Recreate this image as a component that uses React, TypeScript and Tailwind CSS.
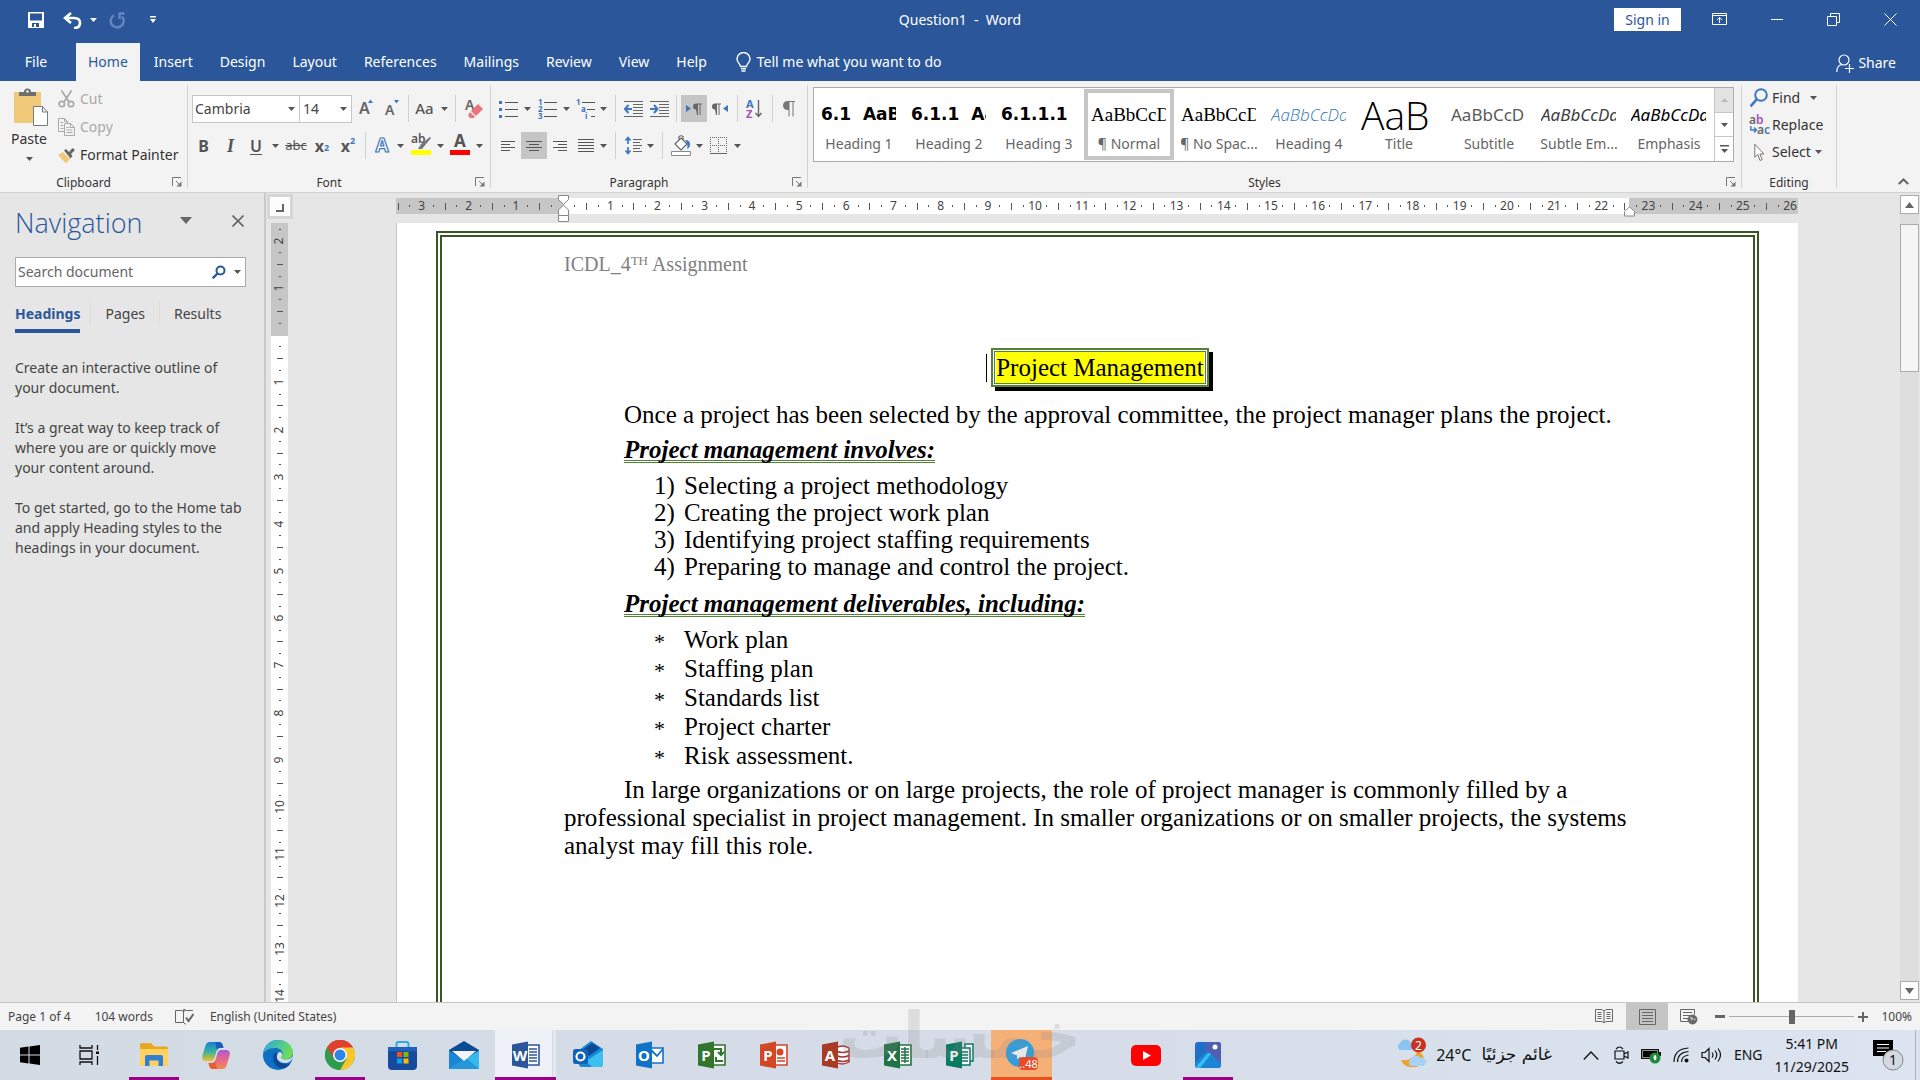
import React from "react";

type Kids = { children?: React.ReactNode };

/* ---------- small building blocks ---------- */

function Caret({ className = "text-[#555]" }: { className?: string }) {
  return (
    <svg width="7" height="4" viewBox="0 0 7 4" className={className} aria-hidden="true">
      <path d="M0 0h7L3.5 4z" fill="currentColor" />
    </svg>
  );
}

function Btn({ label, className, children }: { label: string; className: string } & Kids) {
  return (
    <button type="button" aria-label={label} className={`flex h-[27px] shrink-0 items-center justify-center ${className}`}>
      {children}
    </button>
  );
}

function Drop({ label, className }: { label: string; className: string }) {
  return (
    <Btn label={label} className={className}>
      <Caret />
    </Btn>
  );
}

function Sep({ className }: { className: string }) {
  return (
    <div className={`flex h-[27px] shrink-0 justify-center ${className}`}>
      <div className="w-px bg-[#d2d2d2]" />
    </div>
  );
}

function Launcher({ label }: { label: string }) {
  return (
    <button type="button" aria-label={label} className="absolute right-1 bottom-0 flex h-3 w-3 items-center justify-center">
      <svg width="10" height="10" viewBox="0 0 10 10" fill="none" stroke="#777">
        <path d="M.5 9V.5H9M4 4l4 4" />
        <path d="M9.5 4.5v5h-5z" fill="#777" stroke="none" />
      </svg>
    </button>
  );
}

function Group({ name, className, launcher, children }: { name: string; className: string; launcher?: boolean } & Kids) {
  return (
    <section aria-label={name} className={`relative flex flex-col border-r border-[#d2d2d2] ${className}`}>
      <div className="flex-1">{children}</div>
      <div className={`h-[13px] text-center text-xs leading-4 text-[#333] ${launcher ? "pr-5" : ""}`}>{name}</div>
      {launcher && <Launcher label={`${name} settings`} />}
    </section>
  );
}

function Lines({ rows, w = 18, h = 18 }: { rows: [number, number, number][]; w?: number; h?: number }) {
  return (
    <svg width={w} height={h} viewBox={`0 0 ${w} ${h}`} aria-hidden="true">
      {rows.map(([x, y, len], i) => (
        <rect key={i} x={x} y={y} width={len} height="1" fill="#555" />
      ))}
    </svg>
  );
}

/* ---------- title bar ---------- */

function TitleBar() {
  return (
    <div className="grid h-[43px] grid-cols-[1fr_auto_1fr] pb-3 text-white">
      <div className="flex items-start pt-2.5">
        <button type="button" aria-label="Save" className="ml-[26px] flex h-5 w-5 items-center justify-center">
          <svg width="16" height="16" viewBox="0 0 16 16">
            <path fillRule="evenodd" d="M0 0h16v16H0zM2 1.500v7h12v-7zM4 11v4h2v-3h2v3h3v-4z" fill="#fff" />
          </svg>
        </button>
        <button type="button" aria-label="Undo" className="ml-4 flex h-5 w-5 items-center justify-center">
          <svg width="19" height="17" viewBox="0 0 19 17" fill="none" stroke="#fff">
            <path d="M8 1 2 6l6 5M2 6h9q6 0 6 5t-6 5" strokeWidth="2.600" />
          </svg>
        </button>
        <button type="button" aria-label="Undo options" className="ml-[3px] flex h-5 w-4 items-center justify-center">
          <Caret className="text-white" />
        </button>
        <button type="button" aria-label="Repeat" className="ml-1.5 flex h-5 w-5 items-center justify-center">
          <svg width="17" height="17" viewBox="0 0 17 17" fill="none" stroke="#6486c0" strokeWidth="2.400">
            <path d="M5 3.200A6.500 6.500 0 1 0 13 4.500M10 1.500h5.500M10.500 1v6" />
          </svg>
        </button>
        <button type="button" aria-label="Customize Quick Access Toolbar" className="ml-4 flex h-5 w-5 items-center justify-center">
          <svg width="7" height="8" viewBox="0 0 7 8" fill="#fff">
            <path d="M0 0h6v1.500H0zM0 3h6L3 7z" />
          </svg>
        </button>
      </div>
      <h1 className="pt-2.5 text-sm leading-5 whitespace-pre">Question1  -  Word</h1>
      <div className="flex items-start justify-end">
        <button type="button" className="mt-2 mr-7 h-[23px] w-[67px] bg-white text-sm leading-5 text-[#2b579a]">
          Sign in
        </button>
        <button type="button" aria-label="Ribbon Display Options" className="mt-2.5 mr-[38px] flex h-[18px] w-5 items-center justify-center">
          <svg width="15" height="12" viewBox="0 0 15 12" fill="none" stroke="#fff">
            <path d="M.5.5h14v11H.5zM.5 2.500h14M7.500 10V4.500M5 7l2.500-2.500L10 7" />
          </svg>
        </button>
        <button type="button" aria-label="Minimize" className="mt-2.5 mr-9 flex h-[18px] w-5 items-center justify-center">
          <span className="h-px w-3 bg-white" />
        </button>
        <button type="button" aria-label="Restore Down" className="mt-2.5 mr-[37px] flex h-[18px] w-5 items-center justify-center">
          <svg width="13" height="13" viewBox="0 0 13 13" fill="none" stroke="#fff">
            <path d="M.5 3.500h9v9h-9zM3.500 3.500v-3h9v9h-3" />
          </svg>
        </button>
        <button type="button" aria-label="Close" className="mt-2.5 mr-5 flex h-[18px] w-5 items-center justify-center">
          <svg width="13" height="13" viewBox="0 0 13 13" fill="none" stroke="#fff">
            <path d="m.5.5 12 12M12.500.5l-12 12" />
          </svg>
        </button>
      </div>
    </div>
  );
}

function TabRow() {
  const tabs = ["Insert", "Design", "Layout", "References", "Mailings", "Review", "View", "Help"];
  return (
    <nav className="flex h-[38px] items-center text-sm leading-5 text-white">
      <button type="button" className="w-[76px] pr-1 text-center">File</button>
      <button type="button" className="h-full bg-[#f3f3f3] px-3 text-[#2b579a]">Home</button>
      {tabs.map((t) => (
        <button key={t} type="button" className="pr-[13px] pl-[14px]">{t}</button>
      ))}
      <button type="button" className="ml-4 flex items-center gap-1.5">
        <svg width="15" height="20" viewBox="0 0 15 20" fill="none" stroke="#fff" strokeWidth="1.400">
          <path d="M4.500 14.500c0-3-3.500-3.500-3.500-7.500a6.500 6.500 0 0 1 13 0c0 4-3.500 4.500-3.500 7.500zM5 16.800h5M5.500 19h4" />
        </svg>
        Tell me what you want to do
      </button>
      <button type="button" className="mr-6 ml-auto flex items-center gap-1 pt-0.5">
        <svg width="18" height="19" viewBox="0 0 18 19" fill="none" stroke="#fff" strokeWidth="1.200">
          <circle cx="8" cy="6" r="5" />
          <path d="M.8 18c0-4 2.200-7 5.200-7.500M9 14.500h9M13.500 10v9" />
        </svg>
        Share
      </button>
    </nav>
  );
}

/* ---------- ribbon ---------- */

function ClipboardGroup() {
  return (
    <Group name="Clipboard" launcher className="w-[188px]">
      <div className="flex">
        <button type="button" className="flex w-[58px] flex-col items-center pt-[3px] text-sm leading-6 text-[#333]">
          <svg width="34" height="39" viewBox="0 0 34 39" className="ml-1">
            <path d="M0 4h27v31H0z" fill="#efc878" />
            <path d="M5 8V4h5a3.500 3.500 0 0 1 7 0h5v4z" fill="#6d6d6d" />
            <circle cx="13.500" cy="3.500" r="1.300" fill="#f3f3f3" />
            <path d="M19.500 18.500h9l5 5.500v13.500h-14zM28.500 18.500V24h5" fill="#fff" stroke="#7a7a7a" />
          </svg>
          Paste
          <span className="pt-1.5 leading-none"><Caret /></span>
        </button>
        <div className="flex flex-col items-start gap-2 pt-1 text-sm leading-5 whitespace-nowrap text-[#a9a9a9]">
          <button type="button" className="flex items-center gap-[5px]">
            <svg width="17" height="18" viewBox="0 0 17 18" fill="none" stroke="#a9a9a9" strokeWidth="1.700">
              <path d="M3.500.5 11 12M13.500.5 6 12" />
              <circle cx="3.800" cy="14" r="2.700" />
              <circle cx="13" cy="14" r="2.700" />
            </svg>
            Cut
          </button>
          <button type="button" className="flex items-center gap-[5px]">
            <svg width="17" height="18" viewBox="0 0 17 18" fill="none" stroke="#a9a9a9">
              <path d="M6 13.500H.5V.5h6l3 3V5M6.500.5v3h3M2.500 4.500H5M2.500 7.500h3M2.500 10.500h3" />
              <path d="M6.500 5.500h6l4 4v8h-10zM12.500 5.500v4h4M8.500 9.500h3M8.500 12h6M8.500 14.500h6" fill="#f3f3f3" />
            </svg>
            Copy
          </button>
          <button type="button" className="flex items-center gap-[5px] text-[#333]">
            <svg width="17" height="17" viewBox="0 0 17 17">
              <path d="m0 8 5-3 7 7-4 4.500z" fill="#efc878" />
              <path d="m6 3.500 2-1.500 3 3 3.500-4L17 3l-4 4 1.500 2-2 2.500z" fill="#666" />
            </svg>
            Format Painter
          </button>
        </div>
      </div>
    </Group>
  );
}

function FontGroup() {
  return (
    <Group name="Font" launcher className="w-[303px]">
      <div className="mt-2.5 flex h-[27px] items-center pl-1">
        <label className="flex h-7 w-[108px] items-center justify-between border border-[#c6c6c6] bg-white pr-1 pl-0.5">
          <input aria-label="Font name" defaultValue="Cambria" className="w-20 text-sm text-[#444] outline-none" />
          <Caret />
        </label>
        <label className="-ml-px flex h-7 w-[53px] items-center justify-between border border-[#c6c6c6] bg-white pr-1 pl-[3px]">
          <input aria-label="Font size" defaultValue="14" className="w-7 text-sm text-[#444] outline-none" />
          <Caret />
        </label>
        <Btn label="Increase font size" className="w-7">
          <svg width="15" height="18" viewBox="0 0 15 18" className="overflow-visible"><text x="0" y="14" fontSize="16" fontWeight="600" fill="#666">A</text><path d="m9 3 2.500-3.500L14 3z" fill="#3c78c0" /></svg>
        </Btn>
        <Btn label="Decrease font size" className="w-6">
          <svg width="15" height="18" viewBox="0 0 15 18" className="overflow-visible"><text x="0" y="15" fontSize="14" fontWeight="600" fill="#666">A</text><path d="m9 0 2.500 3.500L14 0z" fill="#3c78c0" /></svg>
        </Btn>
        <Sep className="w-2" />
        <Btn label="Change case" className="w-[25px] text-[15px] font-medium text-[#555]">Aa</Btn>
        <Drop label="Change case options" className="w-[14px]" />
        <Sep className="w-2" />
        <Btn label="Clear all formatting" className="w-[30px]">
          <svg width="18" height="19" viewBox="0 0 18 19" className="overflow-visible">
            <text x="0" y="11" fontSize="14" fontWeight="600" fill="#666">A</text>
            <path d="m6 12 7-7 5 5-7 7z" fill="#e8757a" />
            <path d="m5 13 5 5-1.500 1H5l-2-2.500z" fill="#e8757a" />
          </svg>
        </Btn>
      </div>
      <div className="mt-2.5 flex pl-0.5">
        <Btn label="Bold" className="w-[27px] text-base font-bold text-[#555]">B</Btn>
        <Btn label="Italic" className="w-[27px] font-['Liberation_Serif',serif] text-lg font-bold text-[#555] italic">I</Btn>
        <Btn label="Underline" className="w-6 text-base font-semibold text-[#555] underline underline-offset-2">U</Btn>
        <Drop label="Underline options" className="w-[15px]" />
        <Btn label="Strikethrough" className="w-[26px] text-[13px] text-[#555] line-through">abc</Btn>
        <Btn label="Subscript" className="w-[26px] text-base font-bold text-[#555]">x<sub className="text-[9px] text-[#3c78c0]">2</sub></Btn>
        <Btn label="Superscript" className="w-[26px] text-base font-bold text-[#555]">x<sup className="text-[9px] text-[#3c78c0]">2</sup></Btn>
        <Sep className="w-2" />
        <Btn label="Text effects" className="w-[25px]">
          <svg width="18" height="19" viewBox="0 0 18 19" className="overflow-visible"><text x="9" y="16" textAnchor="middle" fontSize="19" fontWeight="700" fill="#fff" stroke="#3c78c0" strokeWidth="1.200">A</text></svg>
        </Btn>
        <Drop label="Text effects options" className="w-[13px]" />
        <Btn label="Text highlight color" className="w-[27px]">
          <svg width="20" height="21" viewBox="0 0 20 21" className="overflow-visible">
            <text x="0" y="8" fontSize="12" fontWeight="600" fill="#555">ab</text>
            <path d="m19 2-9 7-3 5h4l9-11z" fill="#777" />
            <path d="M0 15h20v5H0z" fill="#ff0" />
          </svg>
        </Btn>
        <Drop label="Highlight options" className="w-[13px]" />
        <Btn label="Font color" className="w-[26px]">
          <svg width="20" height="21" viewBox="0 0 20 21" className="overflow-visible">
            <text x="10" y="12" textAnchor="middle" fontSize="17" fontWeight="700" fill="#555">A</text>
            <path d="M0 15h20v5H0z" fill="#f00" />
          </svg>
        </Btn>
        <Drop label="Font color options" className="w-[13px]" />
      </div>
    </Group>
  );
}

function ListIcon({ kind }: { kind: "bullets" | "numbers" | "multi" }) {
  const off = kind === "multi" ? [6, 11, 15] : [6, 6, 6];
  const chars = kind === "multi" ? ["1", "a", "i"] : ["1", "2", "3"];
  return (
    <svg width="19" height="20" viewBox="0 0 19 20" className="overflow-visible">
      {[3, 10, 17].map((y, i) => (
        <g key={y}>
          {kind === "bullets" ? (
            <rect x="0" y={y - 1} width="3" height="3" fill="#3c78c0" />
          ) : (
            <text x={off[i] - 6} y={y + 3} fontSize="8" fontWeight="700" fill="#3c78c0">{chars[i]}</text>
          )}
          <rect x={off[i]} y={y} width={19 - off[i]} height="1" fill="#555" />
        </g>
      ))}
    </svg>
  );
}

function IndentIcon({ d }: { d: string }) {
  return (
    <svg width="19" height="18" viewBox="0 0 19 18">
      <path d="M0 1.500h19M9 4.500h10M9 7.500h10M9 10.500h10M9 13.500h10M0 16.500h19" stroke="#666" />
      <path d={d} stroke="#3c78c0" strokeWidth="2" fill="none" />
    </svg>
  );
}

function ParagraphGroup() {
  return (
    <Group name="Paragraph" launcher className="w-[317px]">
      <div className="mt-2.5 flex pl-1">
        <Btn label="Bullets" className="w-[26px]"><ListIcon kind="bullets" /></Btn>
        <Drop label="Bullet options" className="w-3" />
        <Btn label="Numbering" className="w-7"><ListIcon kind="numbers" /></Btn>
        <Drop label="Numbering options" className="w-[11px]" />
        <Btn label="Multilevel list" className="w-[26px]"><ListIcon kind="multi" /></Btn>
        <Drop label="Multilevel options" className="w-[11px]" />
        <Sep className="w-3" />
        <Btn label="Decrease indent" className="w-[25px]"><IndentIcon d="M8 9H1M4.500 5 1 9l3.500 4" /></Btn>
        <Btn label="Increase indent" className="w-[26px]"><IndentIcon d="M0 9h7M4 5l3.500 4L4 13" /></Btn>
        <Sep className="w-[9px]" />
        <Btn label="Left-to-right text direction" className="w-[26px] bg-[#c5c5c5]">
          <svg width="16" height="12" viewBox="0 0 16 12"><path d="m0 2 5 3.500L0 9z" fill="#3c78c0" /><path d="M10 6.500a3 3 0 0 1 0-6h6v1h-1.500V12h-1V1.500h-1.500V12h-1z" fill="#666" /></svg>
        </Btn>
        <Btn label="Right-to-left text direction" className="w-[26px]">
          <svg width="16" height="12" viewBox="0 0 16 12"><path d="m16 2-5 3.500L16 9z" fill="#3c78c0" /><path d="M3 6.500a3 3 0 0 1 0-6h6v1H7.500V12h-1V1.500H5V12H4z" fill="#666" /></svg>
        </Btn>
        <Sep className="w-2" />
        <Btn label="Sort" className="w-[27px]">
          <svg width="17" height="20" viewBox="0 0 17 20" className="overflow-visible">
            <text x="0" y="9" fontSize="11" fontWeight="700" fill="#3c78c0">A</text>
            <text x="0" y="19" fontSize="11" fontWeight="700" fill="#a34fb4">Z</text>
            <path d="M12.500 1v16M9.500 14l3 3.500 3-3.500" fill="none" stroke="#666" strokeWidth="1.400" />
          </svg>
        </Btn>
        <Sep className="w-2" />
        <Btn label="Show paragraph marks" className="w-[26px]">
          <svg width="12" height="16" viewBox="0 0 12 16"><path d="M4.500 9a4.500 4.500 0 0 1 0-9H12v1h-1.500v14.500h-1V1H6.500v14.500h-1V9z" fill="#777" /></svg>
        </Btn>
      </div>
      <div className="mt-2.5 flex pl-1">
        <Btn label="Align left" className="w-[26px]"><Lines w={14} h={12} rows={[[0, 1, 14], [0, 4, 9], [0, 7, 14], [0, 10, 9]]} /></Btn>
        <Btn label="Center" className="w-[26px] bg-[#c5c5c5]"><Lines w={16} h={12} rows={[[0, 1, 16], [3, 4, 10], [0, 7, 16], [3, 10, 10]]} /></Btn>
        <Btn label="Align right" className="w-[26px]"><Lines w={14} h={12} rows={[[0, 1, 14], [5, 4, 9], [0, 7, 14], [5, 10, 9]]} /></Btn>
        <Btn label="Justify" className="w-[25px]"><Lines w={16} h={14} rows={[[0, 0, 16], [0, 3, 16], [0, 6, 16], [0, 9, 16], [0, 12, 16]]} /></Btn>
        <Drop label="Justify options" className="w-[11px]" />
        <Sep className="w-3" />
        <Btn label="Line spacing" className="w-6">
          <svg width="17" height="19" viewBox="0 0 17 19">
            <path d="M8 3.500h9M8 6.500h7M8 9.500h9M8 12.500h7M8 15.500h9" stroke="#666" />
            <path d="M3 8V1.500M.5 4.500 3 1.500l2.500 3M3 11v6.500M.5 14.500l2.500 3 2.500-3" fill="none" stroke="#3c78c0" strokeWidth="1.700" />
          </svg>
        </Btn>
        <Drop label="Line spacing options" className="w-[11px]" />
        <Sep className="w-3" />
        <Btn label="Shading" className="w-[25px]">
          <svg width="20" height="21" viewBox="0 0 20 21" fill="none">
            <path d="m4 9 6-6 6 6-6 6zM8 6V1.500Q10 0 12 1.500V5" fill="#fff" stroke="#666" strokeWidth="1.200" />
            <path d="M14 5q5 0 5 4t-3 5q1.500-5-2-9" fill="#3c78c0" />
            <path d="M.5 16.500h19v4H.5z" fill="#fff" stroke="#888" />
          </svg>
        </Btn>
        <Drop label="Shading options" className="w-3" />
        <Btn label="Borders" className="w-[26px]">
          <svg width="17" height="17" viewBox="0 0 17 17" fill="none" stroke="#666">
            <path d="M.5 0v16M8.500 0v16M16.500 0v16M0 .5h17M0 8.500h17" strokeDasharray="1 1" />
            <path d="M0 16.500h17" />
          </svg>
        </Btn>
        <Drop label="Border options" className="w-[13px]" />
      </div>
    </Group>
  );
}

const styleItems = [
  { sample: "6.1  AaB", name: "Heading 1", look: "font-['DejaVu_Sans',sans-serif] text-[17px] font-bold text-black" },
  { sample: "6.1.1  Aa", name: "Heading 2", look: "font-['DejaVu_Sans',sans-serif] text-[17px] font-bold text-black" },
  { sample: "6.1.1.1", name: "Heading 3", look: "font-['DejaVu_Sans',sans-serif] text-[17px] font-bold text-black" },
  { sample: "AaBbCcDd", name: "¶ Normal", look: "font-['Liberation_Serif',serif] text-[19px] text-black", on: true },
  { sample: "AaBbCcDd", name: "¶ No Spac...", look: "font-['Liberation_Serif',serif] text-[19px] text-black" },
  { sample: "AaBbCcDd", name: "Heading 4", look: "font-['Open_Sans',sans-serif] text-[17px] font-light italic text-[#2e74b5]" },
  { sample: "AaB", name: "Title", look: "font-['Open_Sans',sans-serif] text-[39px] font-light text-black" },
  { sample: "AaBbCcD", name: "Subtitle", look: "text-[17px] text-[#5a5a5a]" },
  { sample: "AaBbCcDd", name: "Subtle Em...", look: "text-[17px] italic text-[#404040]" },
  { sample: "AaBbCcDd", name: "Emphasis", look: "text-[17px] italic text-black" },
];

function StylesGroup() {
  return (
    <Group name="Styles" launcher className="min-w-0 flex-1">
      <div className="mt-0.5 mr-[7px] ml-[5px] flex h-[75px] border border-[#ababab] bg-white">
        <div className="flex flex-1 overflow-hidden">
          {styleItems.map((s) => (
            <button
              key={s.name}
              type="button"
              className={`my-px flex w-[90px] shrink-0 flex-col overflow-hidden border-4 px-[3px] ${s.on ? "border-[#c6c6c6]" : "border-transparent"}`}
            >
              <span className={`flex h-[39px] w-[75px] shrink-0 items-center overflow-hidden pt-1 leading-none whitespace-pre ${s.look}`}>{s.sample}</span>
              <span className="flex w-full justify-center text-sm leading-6 whitespace-nowrap text-[#666]">{s.name}</span>
            </button>
          ))}
        </div>
        <div className="flex w-[19px] flex-col border-l border-[#c6c6c6]">
          <button type="button" aria-label="Previous styles" className="flex flex-1 items-center justify-center bg-[#e3e3e3]">
            <svg width="7" height="4" viewBox="0 0 7 4"><path d="M0 4h7L3.500 0z" fill="#bbb" /></svg>
          </button>
          <button type="button" aria-label="Next styles" className="flex flex-1 items-center justify-center border-y border-[#c6c6c6]"><Caret /></button>
          <button type="button" aria-label="All styles" className="flex flex-1 items-center justify-center">
            <svg width="9" height="9" viewBox="0 0 9 9"><path d="M0 0h9v1.500H0zM1 4h7L4.500 8z" fill="#555" /></svg>
          </button>
        </div>
      </div>
    </Group>
  );
}

function EditingGroup() {
  return (
    <Group name="Editing" className="w-[95px]">
      <div className="flex flex-col items-start gap-[7px] pt-[3px] pl-2 text-sm leading-5 text-[#333]">
        <button type="button" className="flex items-center">
          <svg width="18" height="20" viewBox="0 0 18 20" fill="none" stroke="#3c78c0" className="mr-1">
            <circle cx="11" cy="7" r="5.800" strokeWidth="2" /><path d="m7 11-6.500 7.500" strokeWidth="2.600" />
          </svg>
          Find
          <span className="ml-2.5"><Caret /></span>
        </button>
        <button type="button" className="flex items-center">
          <svg width="20" height="20" viewBox="0 0 20 20" className="mr-0.5 overflow-visible">
            <text x="-1" y="9" fontSize="12" fontWeight="600" fill="#666">a<tspan fill="#a34fb4">b</tspan></text>
            <text x="7" y="19" fontSize="12" fontWeight="600" fill="#666">a<tspan fill="#3c78c0">c</tspan></text>
            <path d="M.8 11v4H6M4 12.500 6.500 15 4 17.500" fill="none" stroke="#3c78c0" strokeWidth="1.400" />
          </svg>
          Replace
        </button>
        <button type="button" className="flex items-center">
          <svg width="11" height="19" viewBox="0 0 11 19" fill="#fff" stroke="#777" className="mr-[7px] ml-1">
            <path d="M.8 1.200v13l3-2.700 2.200 6 2.200-1-2.300-5.500h4z" />
          </svg>
          Select
          <span className="ml-1"><Caret /></span>
        </button>
      </div>
    </Group>
  );
}

function Ribbon() {
  return (
    <div className="border-b border-[#d2d2d2] bg-[#f3f3f3]">
      <div className="flex h-[111px] pt-1 pb-1">
        <ClipboardGroup />
        <FontGroup />
        <ParagraphGroup />
        <StylesGroup />
        <EditingGroup />
        <div className="flex w-[83px] items-end justify-end pr-[11px] pb-[3px]">
          <button type="button" aria-label="Collapse the Ribbon">
            <svg width="11" height="7" viewBox="0 0 11 7" fill="none" stroke="#666" strokeWidth="2"><path d="m.8 6 4.700-4.500L10.200 6" /></svg>
          </button>
        </div>
      </div>
    </div>
  );
}

/* ---------- navigation pane ---------- */

function NavigationPane() {
  return (
    <aside className="w-[266px] shrink-0 border-r-2 border-[#c9c9c9] pr-[18px] pl-[15px] text-sm leading-5 text-[#444]">
      <div className="flex items-start pt-3">
        <h2 className="flex-1 font-['Open_Sans',sans-serif] text-[27px] leading-9 font-light text-[#2b579a]">Navigation</h2>
        <button type="button" aria-label="Task Pane Options" className="mt-3 mr-10">
          <svg width="12" height="7" viewBox="0 0 12 7"><path d="M0 0h12L6 7z" fill="#666" /></svg>
        </button>
        <button type="button" aria-label="Close pane" className="mt-2.5 mr-0.5">
          <svg width="12" height="12" viewBox="0 0 12 12" stroke="#666" strokeWidth="1.600"><path d="m.5.5 11 11M11.500.5l-11 11" /></svg>
        </button>
      </div>
      <label className="mt-4 flex h-[30px] items-center border border-[#ababab] bg-white pr-1 pl-0.5">
        <input aria-label="Search document" placeholder="Search document" className="min-w-0 flex-1 outline-none placeholder:text-[#666]" />
        <svg width="14" height="14" viewBox="0 0 14 14" fill="none" stroke="#2b579a"><circle cx="8.500" cy="5.500" r="4" strokeWidth="2" /><path d="M5.500 8.500.8 13.200" strokeWidth="2.400" /></svg>
        <span className="ml-2"><Caret /></span>
      </label>
      <div className="mt-[14px] flex">
        <button type="button" className="flex h-8 flex-col border-b-4 border-[#2b579a] pt-[3px] font-bold text-[#2b579a]">Headings</button>
        <div className="mx-[10px] h-6 w-px bg-[#dcdcdc]" />
        <button type="button" className="flex h-6 px-1 pt-[3px]">Pages</button>
        <div className="mx-[10px] h-6 w-px bg-[#dcdcdc]" />
        <button type="button" className="flex h-6 px-1 pt-[3px]">Results</button>
      </div>
      <div className="mt-[25px] flex flex-col gap-5 whitespace-nowrap">
        <p>Create an interactive outline of<br />your document.</p>
        <p>It’s a great way to keep track of<br />where you are or quickly move<br />your content around.</p>
        <p>To get started, go to the Home tab<br />and apply Heading styles to the<br />headings in your document.</p>
      </div>
    </aside>
  );
}

/* ---------- rulers ---------- */

function marks(from: number, to: number) {
  const out: { at: number; kind: "num" | "half" | "dot" | "zero" }[] = [];
  for (let q = from * 4; q <= to * 4; q++) {
    const kind = q === 0 ? "zero" : q % 4 === 0 ? "num" : q % 2 === 0 ? "half" : "dot";
    out.push({ at: q / 4, kind });
  }
  return out;
}

function HorizontalRuler() {
  return (
    <div className="relative mx-auto mt-[5px] flex h-4 w-[1402px] shrink-0 text-xs text-[#444]">
      <div className="w-[167px] bg-[#c6c6c6]" />
      <div className="flex-1 bg-white" />
      <div className="w-[169px] bg-[#c6c6c6]" />
      <div className="absolute inset-0 flex items-center justify-between pr-[7px] pl-0.5">
        {marks(-3.5, 26).map((m) => (
          <span key={m.at} className="flex w-0 items-center justify-center">
            {m.kind === "num" && <span>{Math.abs(m.at)}</span>}
            {m.kind === "half" && <span className="h-[7px] w-px shrink-0 bg-[#555]" />}
            {m.kind === "dot" && <span className="h-0.5 w-px shrink-0 bg-[#555]" />}
          </span>
        ))}
      </div>
      <svg width="11" height="28" viewBox="0 0 11 28" className="absolute -top-[3px] left-[162px]" fill="#fff" stroke="#888">
        <path d="M.5.5h10v4l-5 5-5-5zM5.500 10l5 5v5.500H.5V15zM.5 20.500h10v6H.5z" />
      </svg>
      <svg width="11" height="11" viewBox="0 0 11 11" className="absolute top-2 right-[163px]" fill="#fff" stroke="#888">
        <path d="m5.500.8 5 4.700v4.500H.5V5.500z" />
      </svg>
    </div>
  );
}

function VerticalRuler() {
  return (
    <div className="flex w-7 shrink-0 flex-col pl-[5px]">
      <div className="-ml-[4px] mt-px flex h-[25px] w-[26px] shrink-0 items-center justify-center bg-[#d6d6d6]">
        <button type="button" aria-label="Tab stop" className="flex h-[19px] w-5 items-end justify-end bg-[#fcfcfc] p-1">
          <span className="mr-0.5 h-2 w-2 border-r-2 border-b-2 border-[#666]" />
        </button>
      </div>
      <div className="relative mt-1 flex min-h-0 w-[17px] flex-1 flex-col text-xs text-[#444]">
        <div className="h-[113px] bg-[#c6c6c6]" />
        <div className="flex-1 bg-white" />
        <div className="absolute inset-0 flex flex-col items-center justify-between overflow-hidden py-1.5">
          {marks(-2.25, 14).map((m) => (
            <span key={m.at} className="flex h-0 items-center justify-center">
              {m.kind === "num" && <span className="-rotate-90">{Math.abs(m.at)}</span>}
              {m.kind === "half" && <span className="h-px w-1.5 bg-[#555]" />}
              {m.kind === "dot" && <span className="h-px w-0.5 bg-[#555]" />}
            </span>
          ))}
        </div>
      </div>
    </div>
  );
}

/* ---------- document ---------- */

function SubHead({ children }: Kids) {
  return (
    <h3 className="pl-[60px] leading-7 font-bold italic underline decoration-[#538135] decoration-double decoration-1 underline-offset-2 [text-decoration-skip-ink:none]">
      {children}
    </h3>
  );
}

function Page() {
  const steps = [
    "Selecting a project methodology",
    "Creating the project work plan",
    "Identifying project staffing requirements",
    "Preparing to manage and control the project.",
  ];
  const items = ["Work plan", "Staffing plan", "Standards list", "Project charter", "Risk assessment."];
  return (
    <div className="mx-auto mt-[9px] flex min-h-0 w-[1402px] flex-1 overflow-hidden border-l border-[#c6c6c6] bg-white pt-2 pr-[39px] pl-[39px]">
      <article className="min-h-[1200px] flex-1 border-[6px] border-double border-[#375623] px-[122px] pt-[15px] font-['Liberation_Serif',serif] text-[25px] whitespace-nowrap text-black">
        <header className="text-xl leading-6 text-[#808080]">
          ICDL_4<sup className="text-[13px] leading-none">TH</sup> Assignment
        </header>
        <div className="mt-[72px] flex justify-center gap-1">
          <span className="mt-1.5 h-7 w-px bg-black" />
          <h2 className="border-2 border-[#538135] bg-white p-px shadow-[4px_4px_0_#000]">
            <span className="flex border border-[#538135] px-px">
              <span className="bg-[#ffff00] leading-[31px]">Project Management</span>
            </span>
          </h2>
        </div>
        <p className="mt-[14px] pl-[60px] leading-7">
          Once a project has been selected by the approval committee, the project manager plans the project.
        </p>
        <div className="mt-[7px]"><SubHead>Project management involves:</SubHead></div>
        <ol className="mt-2 pl-[90px]">
          {steps.map((s, i) => (
            <li key={s} className="flex leading-[27px]"><span className="w-[30px]">{i + 1})</span>{s}</li>
          ))}
        </ol>
        <div className="mt-[10px]"><SubHead>Project management deliverables, including:</SubHead></div>
        <ul className="mt-[7px] pl-[90px]">
          {items.map((s) => (
            <li key={s} className="flex h-[29px] leading-[29px]"><span className="w-[30px] pt-0.5 text-[22px]">*</span>{s}</li>
          ))}
        </ul>
        <p className="mt-1.5 indent-[60px] leading-7">
          In large organizations or on large projects, the role of project manager is commonly filled by a<br />
          professional specialist in project management. In smaller organizations or on smaller projects, the systems<br />
          analyst may fill this role.
        </p>
      </article>
    </div>
  );
}

function ScrollBar() {
  return (
    <div className="flex w-5 shrink-0 flex-col py-0.5 pr-px">
      <button type="button" aria-label="Scroll up" className="flex h-[19px] items-center justify-center border border-[#ababab] bg-white">
        <svg width="9" height="6" viewBox="0 0 9 6"><path d="M0 6h9L4.500 0z" fill="#666" /></svg>
      </button>
      <div className="flex flex-1 flex-col bg-[#dedede] pt-2.5">
        <div className="h-[148px] border border-[#ababab] bg-[#f5f5f5]" />
      </div>
      <button type="button" aria-label="Scroll down" className="flex h-[19px] items-center justify-center border border-[#ababab] bg-white">
        <svg width="9" height="6" viewBox="0 0 9 6"><path d="M0 0h9L4.500 6z" fill="#666" /></svg>
      </button>
    </div>
  );
}

/* ---------- status bar ---------- */

function StatusBar() {
  return (
    <footer className="flex h-[28px] shrink-0 items-center border-t border-[#c6c6c6] bg-[#f3f3f3] text-xs text-[#444]">
      <button type="button" className="pl-2">Page 1 of 4</button>
      <button type="button" className="pl-6">104 words</button>
      <button type="button" aria-label="Proofing" className="ml-[22px]">
        <svg width="19" height="16" viewBox="0 0 19 16" fill="none" stroke="#666">
          <path d="M10 1.500v-1H8.500v13H.5v-12h6l2 1M8.500 2.500l2-1h7.500M8.500 13.500l1.500 1.500h1" />
          <path d="m11 8.500 2.500 3.500 5-7" strokeWidth="2" />
        </svg>
      </button>
      <button type="button" className="pl-4">English (United States)</button>
      <div className="ml-auto flex h-full items-center">
        <button type="button" aria-label="Read Mode" className="mr-[13px]">
          <svg width="18" height="15" viewBox="0 0 18 15" fill="none" stroke="#666">
            <path d="M9 2q-1.500-1.500-3-1.500H.5v12H6q2 0 3 1.500 1-1.500 3-1.500h5.500V.5H12Q10.500.5 9 2v12M2.500 3.500h4M2.500 5.500h4M2.500 7.500h4M2.500 9.500h4M11.500 3.500h4M11.500 5.500h4M11.500 7.500h4M11.500 9.500h4" />
          </svg>
        </button>
        <button type="button" aria-label="Print Layout" className="flex h-full w-[42px] items-center justify-center bg-[#c5c5c5]">
          <svg width="17" height="16" viewBox="0 0 17 16" fill="none" stroke="#666"><path d="M.5.5h16v15H.5zM3 3.500h11M3 6.500h11M3 9.500h11M3 12.500h11" /></svg>
        </button>
        <button type="button" aria-label="Web Layout" className="mr-[17px] ml-3">
          <svg width="18" height="16" viewBox="0 0 18 16" fill="none" stroke="#666">
            <path d="M8 12.500H.5V.5h14v5M3 3.500h9M3 6.500h7M3 9.500h5" /><circle cx="12.500" cy="10.500" r="4.500" fill="#666" /><path d="M10 8.500l3 1-2 2M14 11l1.500-1" stroke="#f3f3f3" />
          </svg>
        </button>
        <button type="button" aria-label="Zoom out" className="h-[3px] w-2.5 bg-[#666]" />
        <input
          type="range"
          aria-label="Zoom"
          min={0}
          max={100}
          defaultValue={50}
          className="mx-1 h-4 w-[125px] appearance-none bg-[linear-gradient(#ababab,#ababab)] bg-[length:100%_1px] bg-center bg-no-repeat [&::-webkit-slider-thumb]:h-3.5 [&::-webkit-slider-thumb]:w-1.5 [&::-webkit-slider-thumb]:appearance-none [&::-webkit-slider-thumb]:bg-[#666]"
        />
        <button type="button" aria-label="Zoom in" className="flex h-2.5 w-2.5 items-center justify-center">
          <svg width="10" height="10" viewBox="0 0 10 10"><path d="M4 0h2v4h4v2H6v4H4V6H0V4h4z" fill="#666" /></svg>
        </button>
        <button type="button" className="mr-2 ml-[13px]">100%</button>
      </div>
    </footer>
  );
}

/* ---------- taskbar ---------- */

function OfficeIcon({ color, letter, children }: { color: string; letter: string } & Kids) {
  return (
    <svg width="28" height="28" viewBox="0 0 28 28">
      <path d="M14 4h13v20H14z" fill="#fff" stroke={color} strokeWidth="1.600" />
      {children}
      <path d="M0 3.500 16 .5v27L0 24.500z" fill={color} />
      <text x="8" y="19.500" textAnchor="middle" fontSize="15" fontWeight="700" fill="#fff">{letter}</text>
    </svg>
  );
}

const explorer = (
  <svg width="28" height="24" viewBox="0 0 28 24">
    <path d="M0 1.500Q0 0 1.500 0H11l3 3.500h12.500Q28 3.500 28 5v17q0 1-1 1H1q-1 0-1-1z" fill="#e8a822" />
    <path d="M0 6h28v16q0 1-1 1H1q-1 0-1-1z" fill="#ffd260" />
    <path d="M5 14q0-2 2-2h14q2 0 2 2v9h-4.500v-5.500h-9V23H5z" fill="#2f7fd3" />
  </svg>
);
const copilot = (
  <svg width="28" height="27" viewBox="0 0 28 27">
    <defs>
      <linearGradient id="cpA" x1="0" y1="0" x2="0" y2="1"><stop offset="0" stopColor="#1a7fd8" /><stop offset=".5" stopColor="#35b3a0" /><stop offset="1" stopColor="#f0c024" /></linearGradient>
      <linearGradient id="cpB" x1="0" y1="0" x2="0" y2="1"><stop offset="0" stopColor="#a95ad0" /><stop offset=".5" stopColor="#e8688c" /><stop offset="1" stopColor="#f08a4a" /></linearGradient>
    </defs>
    <path d="M8 0h9q3 0 4 4l.5 2h-4q-2 0-3 3l-2 7q-1 3-4 3H4Q-1 19 .5 13l3-9.500Q4.500 0 8 0z" fill="url(#cpA)" />
    <path d="M20 27h-9q-3 0-4-4l-.5-2h4q2 0 3-3l2-7q1-3 4-3H24q5 0 3.500 6l-3 9.500Q23.500 27 20 27z" fill="url(#cpB)" />
    <path d="M13 0h4q3 0 4 4l.5 2h-4q-1.500 0-2.500 2z" fill="#1b5fb8" />
    <path d="M15 27h-4q-3 0-4-4l-.5-2h4q1.500 0 2.500-2z" fill="#ea5a34" />
  </svg>
);
const edge = (
  <svg width="30" height="30" viewBox="0 0 30 30">
    <defs>
      <linearGradient id="edA" x1="0" y1="0" x2="1" y2=".4"><stop offset="0" stopColor="#2aa6e8" /><stop offset="1" stopColor="#6bdc5a" /></linearGradient>
    </defs>
    <circle cx="15" cy="15" r="15" fill="#0f6fc6" />
    <path d="M0 14C1 5 8 0 15 0c9 0 15 6 15 12.500 0 5-4 7-7.500 7-3 0-4.500-1-4.500-2s1.500-1.500 1.500-4c0-3-3-5.500-7.500-5.500C6 8 1 11 0 14z" fill="url(#edA)" />
    <path d="M12 13c-4 4-2 13 6 15.500 3 .5 7-1.500 9.500-5-3 1.500-10 1-12.500-3-1.500-2.500-1.500-5.500 0-7.500z" fill="#0c4a94" />
    <path d="M15 13q-2 3-.5 6.500 3 4 9 3.500 4-1 6-4 1-2 .5-3-2 3.500-7.500 3.500-4.500-.5-4.500-2 1.500-1.500 1-4-2-2.500-4-.5z" fill="#d6dde8" />
  </svg>
);
const chrome = (
  <svg width="30" height="30" viewBox="0 0 30 30">
    <circle cx="15" cy="15" r="15" fill="#2d9c4c" />
    <path d="M15 15 2 7.500A15 15 0 0 1 28 7.500L15 8z" fill="#e2402f" />
    <path d="M2 7.500 9 19l6-11h13A15 15 0 0 0 2 7.500z" fill="#e2402f" />
    <path d="M2 7.500 9 19 15 30A15 15 0 0 1 2 7.500z" fill="#2d9c4c" />
    <path d="M28 7.500A15 15 0 0 1 15 30l6.500-11L21 11l-6-3.500z" fill="#fbc62c" />
    <circle cx="15" cy="15" r="7" fill="#fff" />
    <circle cx="15" cy="15" r="5.500" fill="#2f85e5" />
  </svg>
);
const store = (
  <svg width="29" height="29" viewBox="0 0 29 29">
    <path d="M8.500 6V3q0-2 2-2h8q2 0 2 2v3" fill="none" stroke="#2fa9e6" strokeWidth="2" />
    <path d="M0 6h29v19q0 4-4 4H4q-4 0-4-4z" fill="#174a9c" />
    <path d="M0 6h29v4H0z" fill="#1d62bd" />
    <path d="M9 11h5v5H9z" fill="#f25022" /><path d="M15.500 11h5v5h-5z" fill="#7fba00" /><path d="M9 17.500h5v5H9z" fill="#00a4ef" /><path d="M15.500 17.500h5v5h-5z" fill="#ffb900" />
  </svg>
);
const mail = (
  <svg width="30" height="28" viewBox="0 0 30 28">
    <path d="M0 9 15 0l15 9v19H0z" fill="#0b4b96" />
    <path d="M0 9.500 16 20 0 28z" fill="#1b86d6" /><path d="M30 9.500 0 28h30z" fill="#35b8ee" />
    <path d="M0 28 17 17l13 11z" fill="#2396dc" />
    <path d="M3 10h24L15 20z" fill="#f4f4f4" />
  </svg>
);
const outlookNew = (
  <svg width="30" height="28" viewBox="0 0 30 28">
    <path d="M6 9 18 0l12 8v15q0 3-3 3H9q-3 0-3-3z" fill="#1b86d6" />
    <path d="m10 8 9-6 8 5-11 8z" fill="#0b4b96" />
    <path d="M30 9 13 20l6 6h8q3 0 3-3z" fill="#3cc0f2" />
    <rect y="8" width="15" height="15" rx="2.500" fill="#0f62bd" />
    <circle cx="7.500" cy="15.500" r="4" fill="none" stroke="#fff" strokeWidth="2.200" />
  </svg>
);
const telegram = (
  <svg width="32" height="32" viewBox="0 0 32 32">
    <circle cx="14" cy="14" r="14" fill="#2d9fe0" />
    <path d="m5 14 17-7-3.500 15-5-4-2.500 2.500V16.500z" fill="#fff" />
    <rect x="13" y="18" width="19" height="13" rx="4" fill="#ea4b26" />
    <text x="22.500" y="28.500" textAnchor="middle" fontSize="11" fill="#fff">..48</text>
  </svg>
);
const youtube = (
  <svg width="30" height="21" viewBox="0 0 30 21"><rect width="30" height="21" rx="5" fill="#f00" /><path d="m12 6 8 4.500-8 4.500z" fill="#fff" /></svg>
);
const photos = (
  <svg width="26" height="26" viewBox="0 0 26 26">
    <rect width="26" height="26" rx="3" fill="#1f6fc8" />
    <path d="M11 0h12q3 0 3 3v20L11 10z" fill="#4f5fb2" />
    <path d="M0 21 10 11q2.500-2 5 0L26 22v1q0 3-3 3H3q-3 0-3-3z" fill="#1b86d6" />
    <path d="m1 25 11-13q2-2 4 0L5 26H3q-1 0-2-1z" fill="#38bdf2" />
    <circle cx="20" cy="5" r="2.500" fill="#fff" />
  </svg>
);

const word = (
  <OfficeIcon color="#2b579a" letter="W"><path d="M17 8h8M17 11h8M17 14h8M17 17h8M17 20h8" stroke="#2b579a" strokeWidth="1.400" /></OfficeIcon>
);
const outlook = (
  <svg width="28" height="28" viewBox="0 0 28 28">
    <path d="M14 7h13v15H14z" fill="#fff" stroke="#0f72c6" strokeWidth="1.600" />
    <path d="m15 9 6 6 6-7" fill="none" stroke="#0f72c6" strokeWidth="1.800" />
    <path d="M0 3.500 16 .5v27L0 24.500z" fill="#0f72c6" />
    <text x="8" y="19.500" textAnchor="middle" fontSize="15" fontWeight="700" fill="#fff">O</text>
  </svg>
);
const project = (
  <OfficeIcon color="#31752f" letter="P"><path d="M16 8h7v5M20 11l3 3 3-3M25 20h-7v-4" fill="none" stroke="#31752f" strokeWidth="2" /></OfficeIcon>
);
const powerpoint = (
  <OfficeIcon color="#d24726" letter="P"><circle cx="20" cy="11" r="3.500" fill="#d24726" /><path d="M17 17h8M17 20h8" stroke="#d24726" strokeWidth="1.600" /></OfficeIcon>
);
const access = (
  <svg width="28" height="28" viewBox="0 0 28 28">
    <path d="M14 7q6-4 13 0v14q-7 4-13 0z" fill="#fff" stroke="#a4373a" strokeWidth="1.400" />
    <path d="M14 10q7 3 13 0M14 14.500q7 3 13 0M14 19q7 3 13 0" fill="none" stroke="#a4373a" strokeWidth="1.600" />
    <path d="M0 3.500 16 .5v27L0 24.500z" fill="#a83a26" />
    <text x="8" y="19.500" textAnchor="middle" fontSize="15" fontWeight="700" fill="#fff">A</text>
  </svg>
);
const excel = (
  <OfficeIcon color="#217346" letter="X"><path d="M17 8h8M17 11h8M17 14h8M17 17h8M17 20h8M21 6v16" stroke="#217346" strokeWidth="1.400" /></OfficeIcon>
);
const publisher = (
  <svg width="28" height="28" viewBox="0 0 28 28">
    <path d="M19 3h8v17h-8z" fill="#fff" stroke="#077568" strokeWidth="1.500" />
    <path d="M12 7h12v17H12z" fill="#fff" stroke="#077568" strokeWidth="1.500" />
    <path d="M16 11h6M16 14h6M16 17h6M16 20h6" stroke="#077568" strokeWidth="1.500" />
    <path d="M0 3.500 16 .5v27L0 24.500z" fill="#0a7a62" />
    <text x="8" y="19.500" textAnchor="middle" fontSize="15" fontWeight="700" fill="#fff">P</text>
  </svg>
);

const apps: { name: string; icon: React.ReactNode; state?: "run" | "active" | "alert" }[] = [
  { name: "File Explorer", icon: explorer, state: "run" },
  { name: "Copilot", icon: copilot },
  { name: "Microsoft Edge", icon: edge },
  { name: "Google Chrome", icon: chrome, state: "run" },
  { name: "Microsoft Store", icon: store },
  { name: "Mail", icon: mail },
  { name: "Word", icon: word, state: "active" },
  { name: "Outlook (new)", icon: outlookNew },
  { name: "Outlook", icon: outlook },
  { name: "Project", icon: project },
  { name: "PowerPoint", icon: powerpoint },
  { name: "Access", icon: access },
  { name: "Excel", icon: excel },
  { name: "Publisher", icon: publisher },
  { name: "Telegram", icon: telegram, state: "alert" },
  { name: "Empty slot", icon: null },
  { name: "YouTube", icon: youtube },
  { name: "Photos", icon: photos, state: "run" },
];

function Taskbar() {
  return (
    <div className="relative flex h-[50px] shrink-0 items-center bg-[linear-gradient(90deg,#d3dbe5,#d6dde8_60%,#dbe4f0)] text-sm text-[#111]">
      <button type="button" aria-label="Start" className="flex h-full w-[60px] items-center justify-center">
        <svg width="20" height="20" viewBox="0 0 20 20"><path d="m0 2.800 8.500-1.200v8H0zM9.500 1.400 20 0v9.500H9.500zM0 10.500h8.500v8L0 17.300zM9.500 10.500H20V20L9.500 18.600z" /></svg>
      </button>
      <button type="button" aria-label="Task View" className="flex h-full w-[63px] items-center justify-center pr-1">
        <svg width="21" height="20" viewBox="0 0 21 20" fill="none" stroke="#111" strokeWidth="1.300">
          <path d="M1 0v3h12V0M1 6h12v8H1zM1 20v-3h12v3M18.500 0v5M18.500 11v9" /><path d="M17 6.500h3V9h-3z" fill="#111" stroke="none" />
        </svg>
      </button>
      {apps.map((a) => (
        <button key={a.name} type="button" aria-label={a.name} className="relative flex h-full w-[62px] shrink-0 items-center justify-center">
          {a.state === "active" && (
            <>
              <span className="absolute inset-y-0 left-0 w-[57px] bg-[#eef2f8]" />
              <span className="absolute inset-y-0 left-[58px] w-[3px] bg-[#e4e9f1]" />
              <span className="absolute bottom-0 left-0 h-[3px] w-[61px] bg-[#9a0089]" />
            </>
          )}
          {a.state === "alert" && <span className="absolute inset-y-0 left-0 w-[61px] border-b-[3px] border-[#e8501c] bg-[#f5b078]" />}
          {a.state === "run" && <span className="absolute inset-x-1.5 bottom-0 h-[3px] bg-[#9a0089]" />}
          <span className="relative">{a.icon}</span>
        </button>
      ))}
      <div className="ml-auto flex h-full items-center">
        <button type="button" className="mr-[31px] flex items-center gap-2.5 text-base">
          <svg width="30" height="32" viewBox="0 0 30 32" className="mb-1">
            <path d="M4 13a4 4 0 0 1 0-7 6 6 0 0 1 11 0 4 4 0 0 1 0 7z" fill="#8ac4f2" />
            <path d="M22 14q8 4 5 12-4 5-13 4-7-1-9-7 11 2 17-9z" fill="#f0a22e" />
            <path d="M15 29a4 4 0 0 1 0-7 6 6 0 0 1 10-1 4 4 0 0 1 2 8z" fill="#a5d2f6" />
            <circle cx="22.500" cy="8" r="7.500" fill="#c8321f" />
            <text x="22.500" y="12.500" textAnchor="middle" fontSize="12" fill="#fff">2</text>
          </svg>
          <span>24°C</span>
          <span dir="rtl" lang="ar" className="font-['DejaVu_Sans',sans-serif] text-[17px]">غائم جزئيًا</span>
        </button>
        <button type="button" aria-label="Show hidden icons" className="mr-[15px]">
          <svg width="16" height="9" viewBox="0 0 16 9" fill="none" stroke="#111" strokeWidth="1.300"><path d="m.8 8.500 7.200-7.500 7.200 7.500" /></svg>
        </button>
        <button type="button" aria-label="Camera" className="mr-3">
          <svg width="15" height="18" viewBox="0 0 15 18" fill="none" stroke="#111" strokeWidth="1.200"><path d="M1 5h9v8H1zM10 8l4-2v6l-4-2M2 3q3.500-4 7 0M2 15.500q3.500 3.500 7 0" /></svg>
        </button>
        <button type="button" aria-label="Battery" className="mr-3">
          <svg width="20" height="18" viewBox="0 0 20 18"><path d="M0 3h18v10H0zM18 6h2v4h-2z" fill="#111" /><path d="M1.500 4.500h15v7h-15z" fill="#000" stroke="#eee" strokeWidth=".6" /><circle cx="14" cy="12" r="5.500" fill="#208a3c" /><path d="M14 8.500q3 3.500 0 6-3-2.500 0-6" fill="#fff" /></svg>
        </button>
        <button type="button" aria-label="Network" className="mr-3">
          <svg width="16" height="16" viewBox="0 0 16 16" fill="none" stroke="#111" strokeWidth="1.200"><path d="M1 15Q1 2 15.500 1M4.500 15q0-9.500 11-10.500M8.500 15q0-6 7-7" /><circle cx="13.500" cy="13.500" r="2" fill="#111" stroke="none" /></svg>
        </button>
        <button type="button" aria-label="Volume" className="mr-3">
          <svg width="21" height="16" viewBox="0 0 21 16" fill="none" stroke="#111" strokeWidth="1.200"><path d="M1 5.500h3l4-4v13l-4-4H1zM11 5.500q2 2.500 0 5M14 3.500q3.500 4.500 0 9M17 1.500q5 6.500 0 13" /></svg>
        </button>
        <button type="button" className="mr-3">ENG</button>
        <button type="button" className="text-center leading-[23px]">5:41 PM<br />11/29/2025</button>
        <button type="button" aria-label="Notifications" className="mr-[10px] ml-6">
          <svg width="32" height="32" viewBox="0 0 32 32">
            <path d="M0 1h20v16h-6l-4 4v-4H0z" fill="#000" /><path d="M4 5.500h12M4 9h12M4 12.500h9" stroke="#fff" strokeWidth="1.200" />
            <circle cx="20" cy="21" r="10" fill="#d3d9e1" stroke="#888" /><text x="20" y="26" textAnchor="middle" fontSize="14" fill="#111">1</text>
          </svg>
        </button>
        <div className="h-full w-[5px] border-l border-[#a9b2bf]" />
      </div>
    </div>
  );
}

export default function App() {
  return (
    <div className="relative flex h-screen flex-col overflow-hidden bg-[#e6e6e6] font-['Noto_Sans','Open_Sans',sans-serif]">
      <header className="shrink-0 bg-[#2b579a]">
        <TitleBar />
        <TabRow />
      </header>
      <Ribbon />
      <main className="flex min-h-0 flex-1">
        <NavigationPane />
        <VerticalRuler />
        <div className="flex min-w-0 flex-1 flex-col overflow-hidden">
          <HorizontalRuler />
          <Page />
        </div>
        <ScrollBar />
      </main>
      <StatusBar />
      <Taskbar />
      <div dir="rtl" lang="ar" className="pointer-events-none absolute inset-x-0 bottom-1 text-center font-['DejaVu_Sans',sans-serif] text-[64px] leading-[80px] font-bold text-[#888]/20">
        خمسات
      </div>
    </div>
  );
}
